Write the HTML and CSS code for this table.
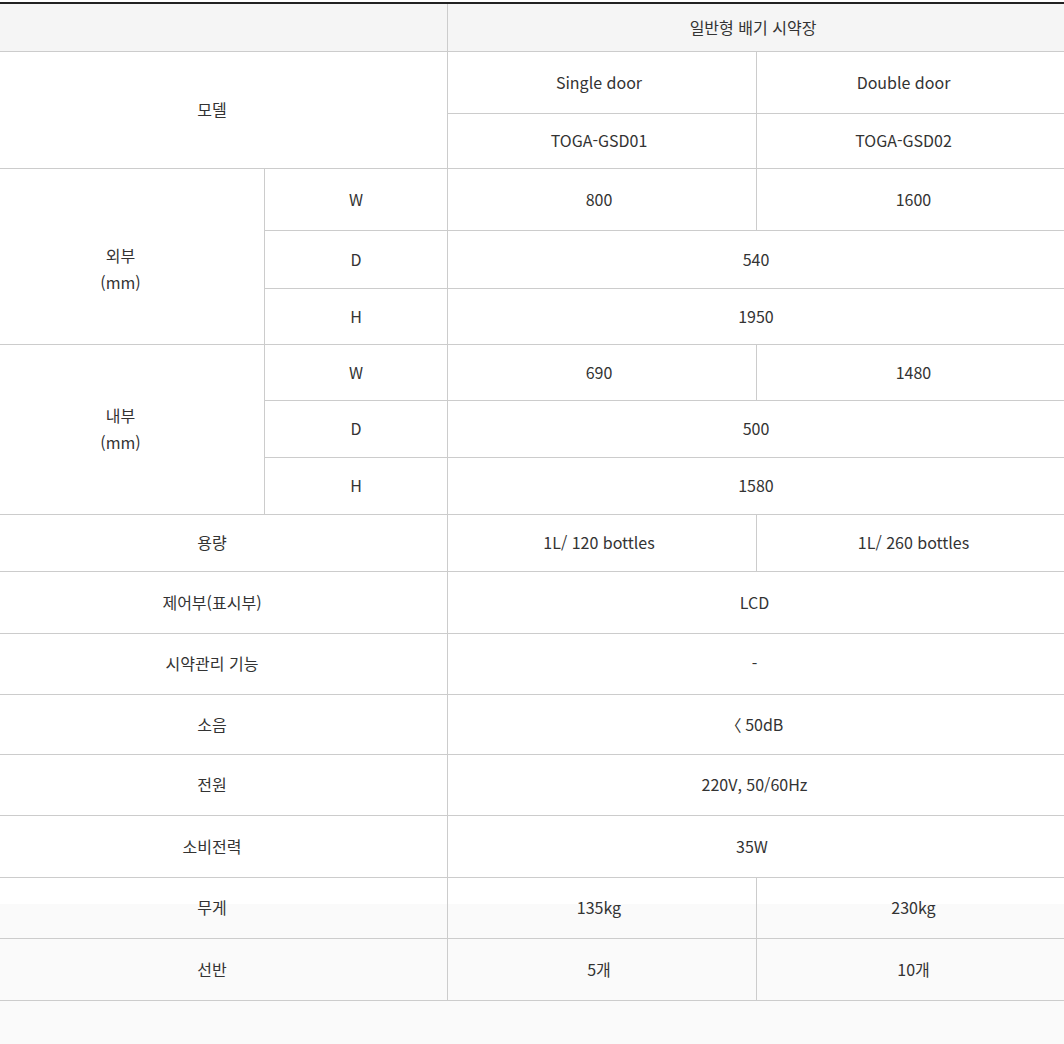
FILE: index.html
```html
<!DOCTYPE html>
<html lang="ko">
<head>
<meta charset="utf-8">
<title>일반형 배기 시약장</title>
<link rel="stylesheet" href="styles.css">
</head>
<body>
<div class="page">
  <div class="spec">
    <div class="cell head c2"></div>
    <div class="cell head title c2">일반형 배기 시약장</div>

    <div class="cell c2 r2">모델</div>
    <div class="cell col-a">Single door</div>
    <div class="cell model-b">Double door</div>
    <div class="cell col-a">TOGA-GSD01</div>
    <div class="cell model-b">TOGA-GSD02</div>

    <div class="cell r3 outer">외부<br>(mm)</div>
    <div class="cell">W</div>
    <div class="cell col-a">800</div>
    <div class="cell data-b">1600</div>
    <div class="cell">D</div>
    <div class="cell c2">540</div>
    <div class="cell">H</div>
    <div class="cell c2">1950</div>

    <div class="cell r3">내부<br>(mm)</div>
    <div class="cell">W</div>
    <div class="cell col-a">690</div>
    <div class="cell data-b">1480</div>
    <div class="cell">D</div>
    <div class="cell c2">500</div>
    <div class="cell">H</div>
    <div class="cell c2">1580</div>

    <div class="cell c2">용량</div>
    <div class="cell col-a">1L/ 120 bottles</div>
    <div class="cell data-b">1L/ 260 bottles</div>

    <div class="cell c2">제어부(표시부)</div>
    <div class="cell c2 wide">LCD</div>

    <div class="cell c2">시약관리 기능</div>
    <div class="cell c2 wide">-</div>

    <div class="cell c2">소음</div>
    <div class="cell c2 wide">〈 50dB</div>

    <div class="cell c2">전원</div>
    <div class="cell c2 wide">220V, 50/60Hz</div>

    <div class="cell c2">소비전력</div>
    <div class="cell c2 narrow">35W</div>

    <div class="cell c2">무게</div>
    <div class="cell col-a">135kg</div>
    <div class="cell data-b">230kg</div>

    <div class="cell c2">선반</div>
    <div class="cell col-a">5개</div>
    <div class="cell data-b">10개</div>
  </div>
</div>
</body>
</html>
```
FILE: styles.css
```css
body {
  margin: 0;
  padding: 0;
  background: #fafafa;
  font-family: "Noto Sans CJK KR", "Noto Sans", sans-serif;
  font-size: 16px;
  color: #333;
}
.page {
  min-height: 1044px;
  background: linear-gradient(to bottom, #ffffff 0, #ffffff 904px, #fafafa 904px, #fafafa 100%);
  padding-top: 2px;
  box-sizing: border-box;
}
.spec {
  width: 1088px;
  margin-left: -24px;
  border-top: 2px solid #222;
  display: grid;
  grid-template-columns: 288px 183px 309px 308px;
  grid-template-rows: 48px 62px 55px 62px 58px 56px 56px 57px 57px 57px 62px 61px 60px 61px 62px 61px 62px;
}
.cell {
  box-sizing: border-box;
  border-bottom: 1px solid #cccccc;
  border-left: 1px solid #cccccc;
  display: flex;
  align-items: center;
  justify-content: center;
  text-align: center;
  line-height: 27px;
  padding-bottom: 1px;
}
.head {
  background: #f5f5f5;
}
.title {
  padding-right: 6px;
}
.col-a {
  padding-right: 6px;
}
.model-b {
  padding-right: 14px;
}
.data-b {
  padding-left: 6px;
}
.wide {
  padding-right: 3px;
}
.narrow {
  padding-right: 8px;
}
.outer {
  padding-top: 26px;
}
.c2 {
  grid-column: span 2;
}
.r2 {
  grid-row: span 2;
}
.r3 {
  grid-row: span 3;
}
```
